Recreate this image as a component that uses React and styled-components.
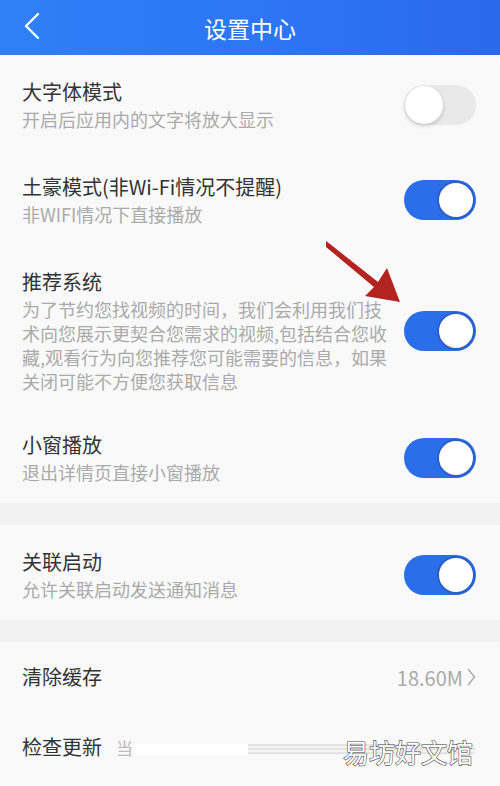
import React from 'react';
import styled, { createGlobalStyle } from 'styled-components';

const GlobalStyle = createGlobalStyle`
  body {
    margin: 0;
    background: #f9f9f9;
    font-family: "Noto Sans CJK SC", "Noto Sans", sans-serif;
  }
`;

const Page = styled.div`
  position: relative;
  width: 500px;
  height: 786px;
  overflow: hidden;
  background: #f9f9f9;
`;

const Header = styled.header`
  height: 55px;
  display: flex;
  align-items: center;
  justify-content: center;
  position: relative;
  background: linear-gradient(90deg, #2f80f6 0%, #2c74f3 60%, #2a68ee 100%);
  color: #fff;
  font-size: 23px;
`;

const Back = styled.div`
  position: absolute;
  left: 22px;
  top: 12px;
  width: 20px;
  height: 28px;
  display: flex;
`;

const Row = styled.div`
  display: flex;
  align-items: center;
  justify-content: space-between;
  padding: 24px 24px ${p => (p.$tight ? '15px' : '19px')} 22px;
  background: #f9f9f9;
`;

const SimpleRow = styled.div`
  display: flex;
  align-items: center;
  height: 70px;
  padding: 0 24px 0 22px;
  background: #f9f9f9;
`;

const Gap = styled.div`
  height: 22px;
  background: #f2f2f2;
`;

const Texts = styled.div`
  display: flex;
  flex-direction: column;
  gap: 2px;
`;

const Title = styled.div`
  font-size: 20px;
  line-height: 26px;
  color: #333;
`;

const Sub = styled.div`
  font-size: 18px;
  line-height: 24px;
  color: #aaa;
`;

const Line = styled.span`
  display: block;
  white-space: nowrap;
`;

const Track = styled.div`
  flex: none;
  width: 72px;
  height: 40px;
  border-radius: 20px;
  box-sizing: border-box;
  display: flex;
  align-items: center;
  justify-content: ${p => (p.$on ? 'flex-end' : 'flex-start')};
  padding: 1px;
  background: ${p => (p.$on ? '#2a6ee9' : '#e9e9e9')};
`;

const Knob = styled.div`
  width: 38px;
  height: 38px;
  border-radius: 50%;
  box-sizing: border-box;
  background: #fff;
  border: ${p => (p.$on ? '2px solid #2a5fc9' : 'none')};
  box-shadow: ${p => (p.$on ? 'none' : '0 2px 4px rgba(0,0,0,0.18)')};
`;

const Spacer = styled.div`
  flex: 1;
`;

const Value = styled.span`
  font-size: 20px;
  color: #aaa;
  display: flex;
  align-items: center;
  gap: 3px;
`;

const Current = styled.span`
  font-size: 17px;
  color: #bbb;
  margin-left: 14px;
`;

const Redacted = styled.div`
  flex: 1;
  height: 11px;
  margin-left: 2px;
  margin-top: 4px;
  background:
    linear-gradient(90deg, #ffffff 0%, #ffffff 33%, transparent 33%),
    repeating-linear-gradient(180deg, #e4e4e4 0px, #e4e4e4 2px, #f4f4f4 2px, #f4f4f4 4px);
  border-radius: 0 6px 6px 0;
`;

const Watermark = styled.div`
  position: absolute;
  right: 27px;
  bottom: 16px;
  font-size: 26px;
  color: #fff;
  -webkit-text-stroke: 1.2px #4a4a4a;
  paint-order: stroke fill;
`;

const Arrow = styled.svg`
  position: absolute;
  left: 320px;
  top: 236px;
`;

function Toggle({ on }) {
  return (
    <Track $on={on}>
      <Knob $on={on} />
    </Track>
  );
}

function SwitchRow({ title, lines, on, tight }) {
  return (
    <Row $tight={tight}>
      <Texts>
        <Title>{title}</Title>
        <Sub>
          {lines.map(l => (
            <Line key={l}>{l}</Line>
          ))}
        </Sub>
      </Texts>
      <Toggle on={on} />
    </Row>
  );
}

export default function App() {
  return (
    <Page>
      <GlobalStyle />
      <Header>
        <Back>
          <svg width="20" height="28" viewBox="0 0 20 28">
            <path d="M16 2 L4 14 L16 26" fill="none" stroke="#fff" strokeWidth="2.4" strokeLinecap="round" strokeLinejoin="round" />
          </svg>
        </Back>
        设置中心
      </Header>
      <SwitchRow title="大字体模式" lines={['开启后应用内的文字将放大显示']} on={false} />
      <SwitchRow title="土豪模式(非Wi-Fi情况不提醒)" lines={['非WIFI情况下直接播放']} on />
      <SwitchRow
        title="推荐系统"
        lines={[
          '为了节约您找视频的时间，我们会利用我们技',
          '术向您展示更契合您需求的视频,包括结合您收',
          '藏,观看行为向您推荐您可能需要的信息，如果',
          '关闭可能不方便您获取信息',
        ]}
        on
        tight
      />
      <SwitchRow title="小窗播放" lines={['退出详情页直接小窗播放']} on />
      <Gap />
      <SwitchRow title="关联启动" lines={['允许关联启动发送通知消息']} on />
      <Gap />
      <SimpleRow>
        <Title>清除缓存</Title>
        <Spacer />
        <Value>
          18.60M
          <svg width="10" height="20" viewBox="0 0 10 20">
            <path d="M2 2 L8.5 10 L2 18" fill="none" stroke="#aaa" strokeWidth="1.5" />
          </svg>
        </Value>
      </SimpleRow>
      <SimpleRow>
        <Title>检查更新</Title>
        <Current>当</Current>
        <Redacted />
      </SimpleRow>
      <Arrow width="90" height="72" viewBox="0 0 90 72">
        <path d="M6 5 L10 8 L58 46 L67 32 L80 66 L45 60 L54 51 L6 11 Z" fill="#b3231f" />
      </Arrow>
      <Watermark>易坊好文馆</Watermark>
    </Page>
  );
}
